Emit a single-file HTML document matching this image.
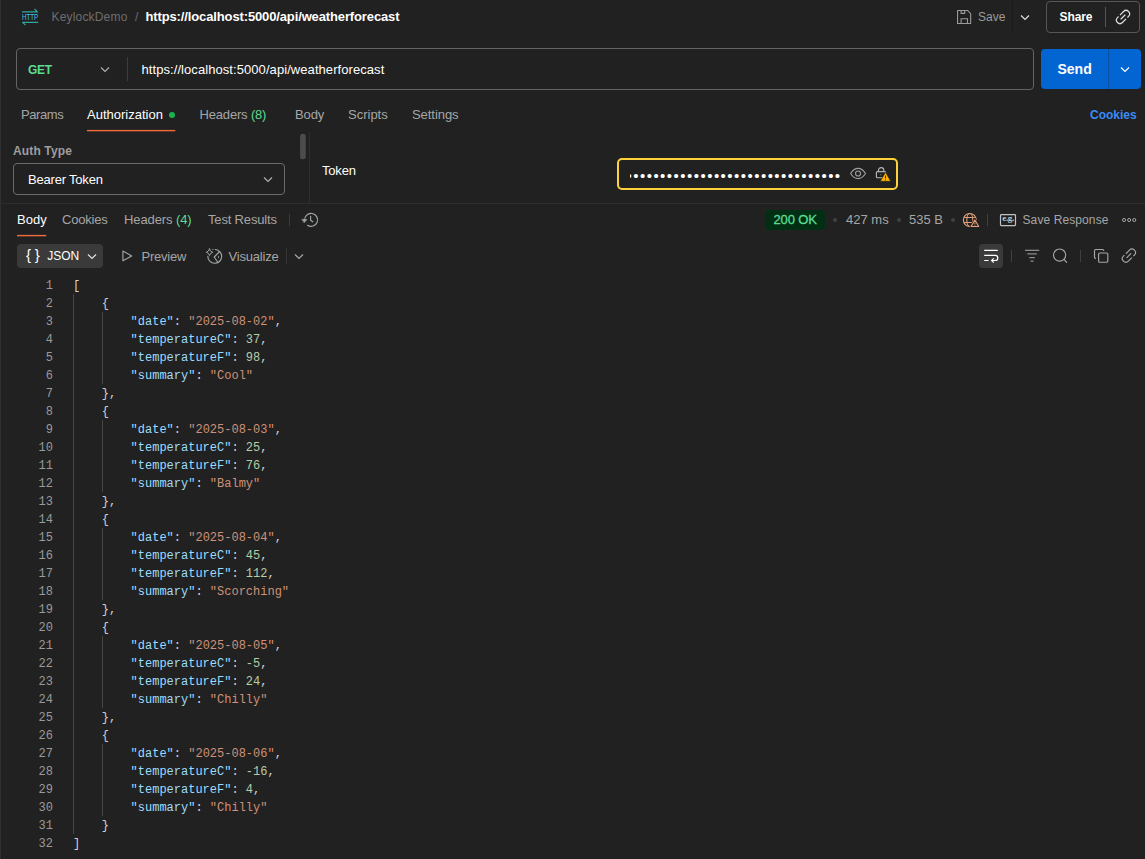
<!DOCTYPE html>
<html lang="en">
<head>
<meta charset="utf-8">
<title>Postman - weatherforecast</title>
<style>
*{box-sizing:border-box;margin:0;padding:0}
html,body{width:1145px;height:859px;overflow:hidden;background:#212121}
body{font-family:"Liberation Sans",sans-serif;font-size:12px;color:#a6a6a6;position:relative}
.abs{position:absolute;white-space:nowrap}
.t{position:absolute;white-space:nowrap;line-height:16px;height:16px}
.w{color:#fff}
.g{color:#5cdc90}
svg{position:absolute;overflow:visible}
.leftedge{position:absolute;left:0;top:0;width:1px;height:859px;background:#303030}
/* url bar */
.urlbar{position:absolute;left:16px;top:48px;width:1018px;height:42px;border:1px solid #646464;border-radius:4px}
.send{position:absolute;left:1041px;top:49px;width:100px;height:40px;background:#0265d2;border-radius:4px}
.send .dv{position:absolute;left:67px;top:0;width:1px;height:40px;background:#0b4f9f}
.share{position:absolute;left:1046px;top:1px;width:94px;height:32px;border:1px solid #565656;border-radius:4px}
.sel{position:absolute;left:13px;top:163px;width:272px;height:32px;border:1px solid #6a6a6a;border-radius:4px}
.tok{position:absolute;left:617px;top:158px;width:281px;height:32px;border:2px solid #fdd13a;border-radius:5px}
.hl{position:absolute;background:#3a3a3a}
.badge{position:absolute;left:765px;top:210px;width:60px;height:20px;background:#022f13;border-radius:4px}
.jsonbtn{position:absolute;left:17px;top:244px;width:86px;height:24px;background:#3a3a3a;border-radius:4px}
.wrapbtn{position:absolute;left:979px;top:244px;width:24px;height:24px;background:#3a3a3a;border-radius:4px}
.dot{position:absolute;width:4px;height:4px;border-radius:2px;background:#404040}
/* code */
.code{position:absolute;left:0;top:277px;width:1145px;font-family:"Liberation Mono",monospace;font-size:12px;line-height:18px;color:#d4d4d4}
.ln{height:18px;white-space:pre;position:relative}
.no{position:absolute;left:0;width:53px;text-align:right;color:#9a9a9a}
.cd{position:absolute;left:73px}
.k{color:#9cdcfe}
.s{color:#ce9178}
.n{color:#b5cea8}
.guide{position:absolute;width:1px;background:#484843}
</style>
</head>
<body>
<div class="leftedge"></div>

<!-- top bar -->
<svg style="left:0;top:0" width="45" height="30" viewBox="0 0 45 30" fill="none" stroke="#30a79d" stroke-width="1.150">
  <path d="M22 11.800H37.400M34.500 9L37.900 12.400"/>
  <path d="M38.200 22.300H22.600M22.200 22.100L25.500 25"/>
</svg>
<div class="t" style="left:21.800px;top:12px;font-size:9px;line-height:10px;height:10px;color:#48c2ea;transform:scaleX(0.690);transform-origin:0 50%">HTTP</div>
<div class="t" style="left:51.500px;top:9px;color:#6e6e6e;letter-spacing:0.180px" id="crumb">KeylockDemo</div>
<div class="t" style="left:135px;top:9px;color:#6e6e6e">/</div>
<div class="t w" style="left:145.500px;top:9px;font-weight:bold;font-size:13px;letter-spacing:-0.130px" id="title">https://localhost:5000/api/weatherforecast</div>

<svg style="left:956px;top:9px" width="16" height="16" viewBox="0 0 16 16" fill="none" stroke="#9a9a9a" stroke-width="1.1">
  <path d="M1.550 1.450h9.900l3.200 3.200v9.800h-13.100z" stroke-linejoin="round"/><path d="M5.100 1.450v2.900h3.600v-2.900"/><path d="M5.100 14.450v-4.650h6.400v4.650"/>
</svg>
<div class="t" style="left:978px;top:9px;color:#9a9a9a" id="save">Save</div>
<div class="hl" style="left:1012px;top:0;width:1px;height:33px;background:#1b1b1b"></div>
<svg style="left:1020px;top:14px" width="10" height="8" viewBox="0 0 10 8" fill="none" stroke="#e0e0e0" stroke-width="1.2"><path d="M1 1.5l4 4 4-4"/></svg>
<div class="share"></div>
<div class="t w" style="left:1059.500px;top:9px;font-weight:bold;font-size:12px;letter-spacing:-0.100px" id="share">Share</div>
<div class="hl" style="left:1105px;top:7px;width:1px;height:20px;background:#555"></div>
<svg style="left:1115px;top:9px" width="16" height="16" viewBox="0 0 16 16" fill="none" stroke="#e0e0e0" stroke-width="1.2" stroke-linecap="round"><g transform="translate(8 8) rotate(-45)"><path stroke-linecap="butt" d="M-2.800 -3.500H-4.300A3.500 3.500 0 0 0 -4.300 3.500H0.800"/><path stroke-linecap="butt" d="M2.800 3.500H4.300A3.500 3.500 0 0 0 4.300 -3.500H-0.800"/><path d="M-2.800 0H2.800"/></g></svg>

<!-- url bar -->
<div class="urlbar"></div>
<div class="t g" style="left:28px;top:62px;font-weight:bold;font-size:12px;letter-spacing:-0.300px" id="get">GET</div>
<svg style="left:100.300px;top:66px" width="10" height="8" viewBox="0 0 10 8" fill="none" stroke="#b0b0b0" stroke-width="1.1"><path d="M1 1.5l4 4 4-4"/></svg>
<div class="hl" style="left:127px;top:57px;width:1px;height:24px;background:#3c3c3c"></div>
<div class="t w" style="left:141.500px;top:62px;font-size:13px;letter-spacing:0.070px" id="url">https://localhost:5000/api/weatherforecast</div>
<div class="send"><div class="dv"></div></div>
<div class="t w" style="left:1057.500px;top:61px;font-weight:bold;font-size:14px" id="send">Send</div>
<svg style="left:1120px;top:66px" width="10" height="8" viewBox="0 0 10 8" fill="none" stroke="#fff" stroke-width="1.2"><path d="M1 1.5l4 4 4-4"/></svg>

<!-- request tabs -->
<div class="t" style="left:21px;top:107px;font-size:13px;letter-spacing:-0.400px" id="tParams">Params</div>
<div class="t w" style="left:87px;top:107px;font-size:13px" id="tAuth">Authorization</div>
<div class="dot" style="left:169px;top:112px;width:6px;height:6px;border-radius:3px;background:#17b451"></div>
<svg style="left:0;top:125px" width="200" height="10"><rect x="87" y="4.900" width="88.300" height="1.400" fill="#f26b3a"/></svg>
<div class="t" style="left:199.500px;top:107px;font-size:13px;letter-spacing:-0.170px" id="tHeaders">Headers <span class="g">(8)</span></div>
<div class="t" style="left:295px;top:107px;font-size:13px;letter-spacing:-0.100px" id="tBody">Body</div>
<div class="t" style="left:348px;top:107px;font-size:13px" id="tScripts">Scripts</div>
<div class="t" style="left:412px;top:107px;font-size:13px;letter-spacing:-0.050px" id="tSettings">Settings</div>
<div class="t" style="left:1090px;top:107px;font-size:12px;font-weight:bold;color:#3a8bf7" id="tCookies">Cookies</div>

<!-- auth panel -->
<div class="t" style="left:13px;top:143px;font-weight:bold;color:#9e9e9e;letter-spacing:0.130px" id="authType">Auth Type</div>
<div class="sel"></div>
<div class="t w" style="left:28px;top:172px;font-size:13px;letter-spacing:-0.200px" id="bearer">Bearer Token</div>
<svg style="left:263px;top:176px" width="10" height="8" viewBox="0 0 10 8" fill="none" stroke="#b0b0b0" stroke-width="1.2"><path d="M1 1.5l4 4 4-4"/></svg>
<svg style="left:295px;top:130px" width="15" height="32"><rect x="5.100" y="3.800" width="5.600" height="25.400" rx="2.500" fill="#4c4c4c"/></svg>
<div class="hl" style="left:309px;top:132px;width:1px;height:72px;background:#2e2e2e"></div>
<div class="t w" style="left:322px;top:163px;font-size:13px;letter-spacing:-0.200px" id="token">Token</div>
<div class="tok"></div>
<div class="abs" style="left:630px;top:166px;width:212px;height:20px;overflow:hidden"><div class="t w" id="dots" style="left:-3.500px;top:0;font-size:15px;line-height:20px;height:20px;letter-spacing:1.470px">••••••••••••••••••••••••••••••••</div></div>
<svg style="left:0;top:0" width="1145" height="210" viewBox="0 0 1145 210" fill="none" stroke="#9c9c9c" stroke-width="1.150">
  <path d="M850.600 173.450C853 169.600 855.400 168.300 858.050 168.300S863.100 169.600 865.500 173.450C863.100 177.300 860.700 178.600 858.050 178.600S853 177.300 850.600 173.450Z" stroke-linejoin="round"/>
  <circle cx="858.050" cy="173.450" r="2.500"/>
  <g stroke="#b4b4b4">
    <rect x="876.400" y="171.600" width="9.200" height="6.100" rx="1"/>
    <path d="M878.500 171.600v-1.400a2.650 2.650 0 0 1 5.300 0v1.400"/>
    <circle cx="880.900" cy="174.700" r="0.500" fill="#b4b4b4" stroke="none"/>
  </g>
  <path d="M885.500 172.300L890.700 181.300H880.300Z" fill="#ffb400" stroke="#212121" stroke-width="0.600" stroke-linejoin="round"/>
  <path d="M885.500 175.600V178.400M885.500 179.400V180.300" stroke="#3a2a00" stroke-width="1"/>
</svg>
<div class="hl" style="left:0;top:203px;width:1145px;height:1px;background:#2e2e2e"></div>

<!-- response tabs -->
<div class="t w" style="left:17px;top:212px;font-size:13px" id="rBody">Body</div>
<svg style="left:0;top:230px" width="100" height="10"><rect x="17" y="4.900" width="29.200" height="1.400" fill="#f26b3a"/></svg>
<div class="t" style="left:62px;top:212px;font-size:13px;letter-spacing:-0.200px" id="rCookies">Cookies</div>
<div class="t" style="left:124px;top:212px;font-size:13px;letter-spacing:-0.100px" id="rHeaders">Headers <span class="g">(4)</span></div>
<div class="t" style="left:208px;top:212px;font-size:13px;letter-spacing:-0.170px" id="rTest">Test Results</div>
<div class="hl" style="left:289px;top:214px;width:1px;height:12px;background:#3c3c3c"></div>
<svg style="left:0;top:200px" width="400" height="80" viewBox="0 200 400 80" fill="none" stroke="#a2a6a6" stroke-width="1.150" stroke-linecap="round" stroke-linejoin="round">
  <path d="M304.600 220.300A6.500 6.500 0 1 1 307.500 225.300"/>
  <path d="M302.200 219.300L306.900 219.600L304.300 222.500Z" fill="#a2a6a6" stroke-width="0.600"/>
  <path d="M310.600 216.200V220.300L312.800 221.800"/>
  <!-- preview play -->
  <path d="M122.900 251L131.700 255.900L122.900 260.800Z"/>
  <!-- visualize -->
  <path d="M215.300 249.520A6.900 6.900 0 1 1 207.850 256.400"/>
  <path d="M219.630 251.520L214.200 257L217.990 262.500"/>
  <ellipse cx="218.500" cy="257.100" rx="0.450" ry="1.400" fill="#a2a6a6" stroke="none"/>
  <path d="M209.500 249Q210.100 251.700 212.800 252.300Q210.100 252.900 209.500 255.600Q208.900 252.900 206.200 252.300Q208.900 251.700 209.500 249Z" stroke-width="1"/>
  <circle cx="212.900" cy="249.300" r="0.650" fill="#a2a6a6" stroke="none"/>
</svg>
<div class="badge"></div>
<div class="t g" style="left:773.500px;top:212px;font-size:13px;letter-spacing:-0.150px;-webkit-text-stroke:0.300px #5cdc90" id="ok">200 OK</div>
<div class="dot" style="left:833px;top:218px"></div>
<div class="t" style="left:846px;top:212px;font-size:13px" id="ms">427 ms</div>
<div class="dot" style="left:897px;top:218px"></div>
<div class="t" style="left:909px;top:212px;font-size:13px" id="sz">535 B</div>
<div class="dot" style="left:951px;top:218px"></div>
<svg style="left:900px;top:200px" width="245" height="40" viewBox="900 200 245 40" fill="none" stroke="#e3a07c" stroke-width="1.100">
  <defs><clipPath id="gc"><path d="M900 200H1145V240H900ZM974.900 217.200L981.200 228.200H968.600Z" clip-rule="evenodd"/></clipPath></defs>
  <g clip-path="url(#gc)">
    <circle cx="969.800" cy="220" r="6.450"/>
    <ellipse cx="969.800" cy="220" rx="3" ry="6.450"/>
    <path d="M964.100 217.500H975.500M964.100 222.500H975.500"/>
  </g>
  <path d="M974.900 219.900L978.700 226.500H971.100Z" stroke-linejoin="round"/>
  <path d="M974.900 222.300V224.300M974.900 225V225.700" stroke-width="0.900"/>
  <rect x="1000.500" y="214.600" width="15" height="11" rx="0.800" stroke="#bfc3c3" stroke-width="1.200"/>
  <g stroke="#a6a6a6" stroke-width="1"><circle cx="1124.050" cy="220" r="1.550"/><circle cx="1129.150" cy="220" r="1.550"/><circle cx="1134.250" cy="220" r="1.550"/></g>
</svg>
<div class="hl" style="left:987px;top:214px;width:1px;height:12px;background:#404040"></div>
<div class="t" style="left:1002.300px;top:213px;font-family:'Liberation Serif',serif;font-size:9px;line-height:10px;height:10px;font-weight:bold;color:#c4c8c8;letter-spacing:-0.350px">e.g.</div>
<div class="t" style="left:1022.500px;top:212px;font-size:12px;letter-spacing:0.100px" id="saveResp">Save Response</div>

<!-- response toolbar -->
<div class="jsonbtn"></div>
<div class="t w" style="left:25.900px;top:247px;font-size:15px;letter-spacing:-0.150px" id="braces">{ }</div>
<div class="t w" style="left:47.200px;top:248px;font-size:12px" id="json">JSON</div>
<svg style="left:86.500px;top:252.500px" width="10" height="8" viewBox="0 0 10 8" fill="none" stroke="#e0e0e0" stroke-width="1.200"><path d="M1 1.500l4 4 4-4"/></svg>
<div class="t" style="left:141.500px;top:249px;font-size:13px;letter-spacing:-0.230px" id="preview">Preview</div>
<div class="t" style="left:228.500px;top:249px;font-size:13px;letter-spacing:-0.200px" id="visualize">Visualize</div>
<div class="hl" style="left:286px;top:248px;width:1px;height:16px;background:#363636"></div>
<svg style="left:294px;top:252.500px" width="10" height="8" viewBox="0 0 10 8" fill="none" stroke="#a6a6a6" stroke-width="1.200"><path d="M1 1.500l4 4 4-4"/></svg>

<div class="wrapbtn"></div>
<svg style="left:970px;top:238px" width="175" height="36" viewBox="970 238 175 36" fill="none" stroke="#a6a6a6" stroke-width="1.150">
  <g stroke="#fff">
    <path d="M984.200 250.300H997.800M984.200 255.300H995.200a2.600 2.600 0 0 1 0 5.200H992M984.200 260.500H988.600"/>
    <path d="M993.800 258.300l-2.200 2.200 2.200 2.200" stroke-linejoin="round"/>
  </g>
  <path d="M1025 250.300H1039.200" stroke="#9a9a9a"/>
  <path d="M1027.300 253.900H1036.900M1029.300 257.500H1034.900M1030.500 261.200H1033.600" stroke="#8a8a8a" stroke-width="1.250"/>
  <circle cx="1059.600" cy="255.050" r="6.100"/>
  <path d="M1063.900 259.400L1066.600 262.400" stroke-linecap="round"/>
  <rect x="1098.600" y="253" width="9.200" height="9.200" rx="1.300"/>
  <path d="M1096 258.400h-0.300a1.200 1.200 0 0 1 -1.200 -1.200v-6.500a1.200 1.200 0 0 1 1.200 -1.200h6.800a1.200 1.200 0 0 1 1.200 1.200v0.300"/>
  <g transform="translate(1128.900 255.650) rotate(-45)"><path stroke-linecap="butt" d="M-2.800 -3.500H-4.300A3.500 3.500 0 0 0 -4.300 3.500H0.800"/><path stroke-linecap="butt" d="M2.800 3.500H4.300A3.500 3.500 0 0 0 4.300 -3.500H-0.800"/><path stroke-linecap="round" d="M-2.800 0H2.800"/></g>
</svg>
<div class="hl" style="left:1011px;top:250px;width:1px;height:12px;background:#404040"></div>
<div class="hl" style="left:1080px;top:250px;width:1px;height:12px;background:#404040"></div>

<!-- code -->
<div class="guide" style="left:73px;top:294px;height:540px"></div>
<div class="guide" style="left:102px;top:312px;height:72px"></div>
<div class="guide" style="left:102px;top:420px;height:72px"></div>
<div class="guide" style="left:102px;top:528px;height:72px"></div>
<div class="guide" style="left:102px;top:636px;height:72px"></div>
<div class="guide" style="left:102px;top:744px;height:72px"></div>
<div class="code">
<div class="ln"><span class="no">1</span><span class="cd">[</span></div>
<div class="ln"><span class="no">2</span><span class="cd">    {</span></div>
<div class="ln"><span class="no">3</span><span class="cd">        <span class="k">"date"</span>: <span class="s">"2025-08-02"</span>,</span></div>
<div class="ln"><span class="no">4</span><span class="cd">        <span class="k">"temperatureC"</span>: <span class="n">37</span>,</span></div>
<div class="ln"><span class="no">5</span><span class="cd">        <span class="k">"temperatureF"</span>: <span class="n">98</span>,</span></div>
<div class="ln"><span class="no">6</span><span class="cd">        <span class="k">"summary"</span>: <span class="s">"Cool"</span></span></div>
<div class="ln"><span class="no">7</span><span class="cd">    },</span></div>
<div class="ln"><span class="no">8</span><span class="cd">    {</span></div>
<div class="ln"><span class="no">9</span><span class="cd">        <span class="k">"date"</span>: <span class="s">"2025-08-03"</span>,</span></div>
<div class="ln"><span class="no">10</span><span class="cd">        <span class="k">"temperatureC"</span>: <span class="n">25</span>,</span></div>
<div class="ln"><span class="no">11</span><span class="cd">        <span class="k">"temperatureF"</span>: <span class="n">76</span>,</span></div>
<div class="ln"><span class="no">12</span><span class="cd">        <span class="k">"summary"</span>: <span class="s">"Balmy"</span></span></div>
<div class="ln"><span class="no">13</span><span class="cd">    },</span></div>
<div class="ln"><span class="no">14</span><span class="cd">    {</span></div>
<div class="ln"><span class="no">15</span><span class="cd">        <span class="k">"date"</span>: <span class="s">"2025-08-04"</span>,</span></div>
<div class="ln"><span class="no">16</span><span class="cd">        <span class="k">"temperatureC"</span>: <span class="n">45</span>,</span></div>
<div class="ln"><span class="no">17</span><span class="cd">        <span class="k">"temperatureF"</span>: <span class="n">112</span>,</span></div>
<div class="ln"><span class="no">18</span><span class="cd">        <span class="k">"summary"</span>: <span class="s">"Scorching"</span></span></div>
<div class="ln"><span class="no">19</span><span class="cd">    },</span></div>
<div class="ln"><span class="no">20</span><span class="cd">    {</span></div>
<div class="ln"><span class="no">21</span><span class="cd">        <span class="k">"date"</span>: <span class="s">"2025-08-05"</span>,</span></div>
<div class="ln"><span class="no">22</span><span class="cd">        <span class="k">"temperatureC"</span>: <span class="n">-5</span>,</span></div>
<div class="ln"><span class="no">23</span><span class="cd">        <span class="k">"temperatureF"</span>: <span class="n">24</span>,</span></div>
<div class="ln"><span class="no">24</span><span class="cd">        <span class="k">"summary"</span>: <span class="s">"Chilly"</span></span></div>
<div class="ln"><span class="no">25</span><span class="cd">    },</span></div>
<div class="ln"><span class="no">26</span><span class="cd">    {</span></div>
<div class="ln"><span class="no">27</span><span class="cd">        <span class="k">"date"</span>: <span class="s">"2025-08-06"</span>,</span></div>
<div class="ln"><span class="no">28</span><span class="cd">        <span class="k">"temperatureC"</span>: <span class="n">-16</span>,</span></div>
<div class="ln"><span class="no">29</span><span class="cd">        <span class="k">"temperatureF"</span>: <span class="n">4</span>,</span></div>
<div class="ln"><span class="no">30</span><span class="cd">        <span class="k">"summary"</span>: <span class="s">"Chilly"</span></span></div>
<div class="ln"><span class="no">31</span><span class="cd">    }</span></div>
<div class="ln"><span class="no">32</span><span class="cd">]</span></div>

</div>
</body>
</html>
